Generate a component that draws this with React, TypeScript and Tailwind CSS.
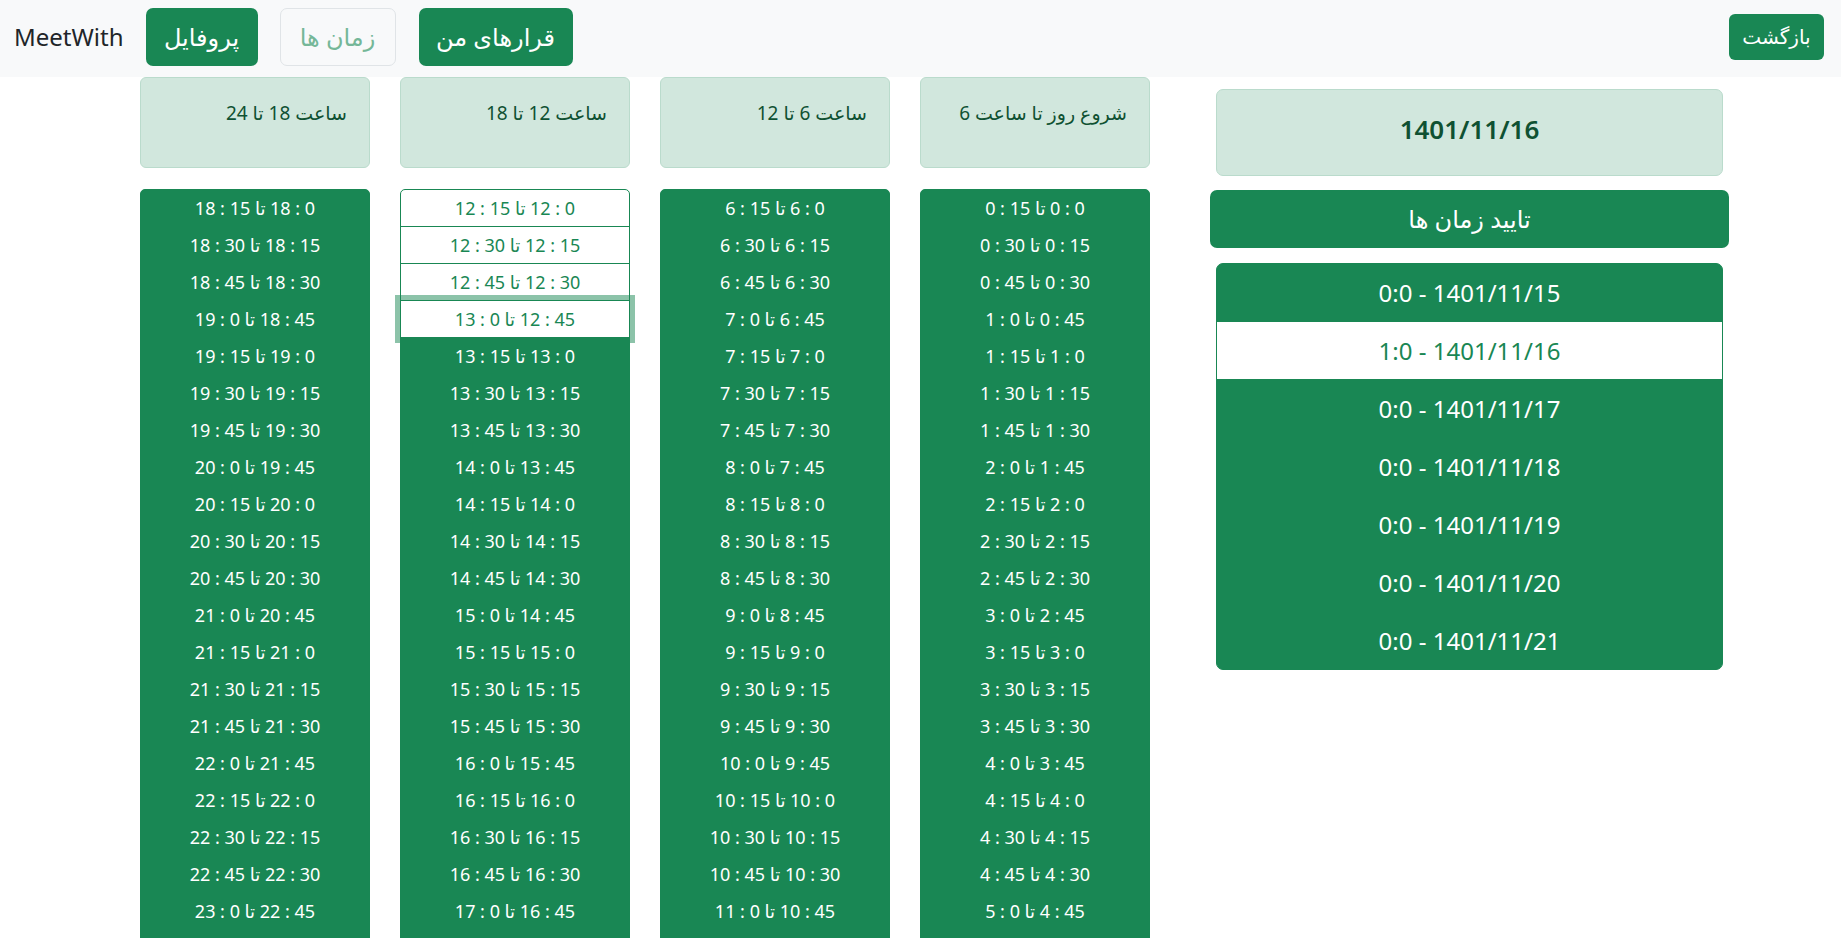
import React from "react";

const headers: Record<number, string> = {
  18: "ساعت 18 تا 24",
  12: "ساعت 12 تا 18",
  6: "ساعت 6 تا 12",
  0: "شروع روز تا ساعت 6",
};

function slotLabel(start: number, i: number): string {
  const h1 = start + Math.floor(i / 4);
  const m1 = (i % 4) * 15;
  let h2 = h1;
  let m2 = m1 + 15;
  if (m2 === 60) {
    m2 = 0;
    h2 = h1 + 1;
  }
  return `${m1} : ${h1} تا ${m2} : ${h2}`;
}

function SlotColumn({ start }: { start: number }) {
  const rows = Array.from({ length: 24 }, (_, i) => i);
  return (
    <div className="flex w-[230px] flex-col">
      <div
        dir="rtl"
        className="h-[91px] rounded-[6px] border border-[#badbcc] bg-[#d1e7dd] pr-[22px] pt-[21px] text-right text-[19px] leading-[29px] text-[#0f5132]"
      >
        {headers[start]}
      </div>
      <div className="mt-[21px] flex flex-col">
        {rows.map((i) => {
          const white = start === 12 && i < 4;
          const focused = start === 12 && i === 3;
          const base =
            "flex h-[38px] items-center justify-center border border-[#198754] text-[18px]";
          const first = i === 0 ? " rounded-t-[5px]" : " -mt-px";
          const look = focused
            ? " relative z-[1] bg-white text-[#198754] shadow-[0_0_0_5px_rgba(25,135,84,0.5)]"
            : white
            ? " bg-white text-[#198754]"
            : " relative z-[2] bg-[#198754] text-white";
          return (
            <div key={i} dir="rtl" className={base + first + look}>
              {slotLabel(start, i)}
            </div>
          );
        })}
      </div>
    </div>
  );
}

const dates: { text: string; active: boolean }[] = [
  { text: "1401/11/15 - 0:0", active: true },
  { text: "1401/11/16 - 1:0", active: false },
  { text: "1401/11/17 - 0:0", active: true },
  { text: "1401/11/18 - 0:0", active: true },
  { text: "1401/11/19 - 0:0", active: true },
  { text: "1401/11/20 - 0:0", active: true },
  { text: "1401/11/21 - 0:0", active: true },
];

export default function App() {
  return (
    <div className="h-screen overflow-hidden bg-white font-['Noto_Sans','DejaVu_Sans',sans-serif] text-[#212529]">
      <nav className="flex h-[77px] items-center bg-[#f8f9fa] pb-[3px] pl-[14px] pr-[17px]">
        <span className="text-[24px] leading-none text-[#212529]">MeetWith</span>
        <button
          dir="rtl"
          className="ml-[22px] flex h-[58px] w-[112px] items-center justify-center rounded-[7px] bg-[#198754] text-[24px] text-white"
        >
          پروفایل
        </button>
        <button
          dir="rtl"
          className="ml-[22px] flex h-[58px] w-[116px] items-center justify-center rounded-[7px] border border-[#e0e4e7] text-[24px] text-[#75b798]"
        >
          زمان ها
        </button>
        <button
          dir="rtl"
          className="ml-[23px] flex h-[58px] w-[154px] items-center justify-center rounded-[7px] bg-[#198754] text-[24px] text-white"
        >
          قرارهای من
        </button>
        <button
          dir="rtl"
          className="ml-auto flex h-[46px] w-[95px] items-center justify-center rounded-[6px] bg-[#198754] text-[20px] text-white"
        >
          بازگشت
        </button>
      </nav>

      <div className="flex items-start pl-[140px]">
        <div className="flex gap-[30px]">
          {[18, 12, 6, 0].map((s) => (
            <SlotColumn key={s} start={s} />
          ))}
        </div>

        <div className="ml-[60px] flex w-[519px] flex-col pt-[12px]">
          <div className="mx-[6px] flex h-[87px] items-center justify-center rounded-[7px] border border-[#badbcc] bg-[#d1e7dd] pb-[6px] text-[26px] font-semibold text-[#0f5132]">
            1401/11/16
          </div>
          <button
            dir="rtl"
            className="mt-[14px] flex h-[58px] items-center justify-center rounded-[7px] bg-[#198754] text-[24px] text-white"
          >
            تایید زمان ها
          </button>
          <div className="mx-[6px] mt-[15px] flex flex-col">
            {dates.map((d, i) => {
              const first = i === 0 ? " rounded-t-[7px]" : " -mt-px";
              const last = i === dates.length - 1 ? " rounded-b-[7px]" : "";
              const look = d.active
                ? " bg-[#198754] text-white"
                : " bg-white text-[#198754]";
              return (
                <div
                  key={d.text}
                  dir="rtl"
                  className={
                    "flex h-[59px] items-center justify-center border border-[#198754] text-[24px]" +
                    first +
                    last +
                    look
                  }
                >
                  {d.text}
                </div>
              );
            })}
          </div>
        </div>
      </div>
    </div>
  );
}
